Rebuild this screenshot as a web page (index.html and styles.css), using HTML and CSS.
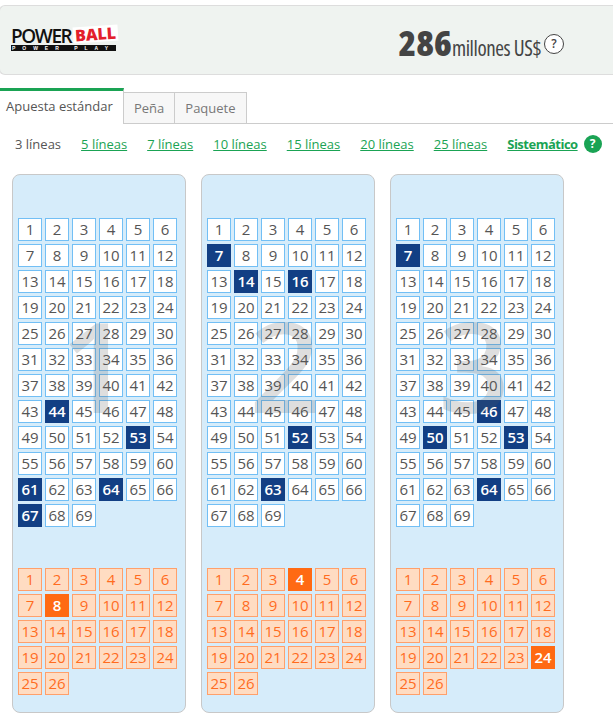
FILE: index.html
```html
<!DOCTYPE html>
<html lang="es">
<head>
    <meta charset="UTF-8">
    <title>Powerball</title>
    <link rel="stylesheet" href="styles.css">
</head>
<body>
    <div class="jackpot">
        <div class="logo">
            <div class="logo-top">
                <span class="logo-power">POWER</span>
                <span class="logo-ball">BALL</span>
            </div>
            <div class="logo-play">POWER PLAY</div>
        </div>
        <div class="prize">
            <span class="prize-num">286</span>
            <span class="prize-unit">millones US$</span>
            <span class="prize-help">?</span>
        </div>
    </div>

    <div class="tabs">
        <div class="tab active">Apuesta estándar</div>
        <div class="tab">Peña</div>
        <div class="tab">Paquete</div>
    </div>

    <div class="lines">
        <span class="current">3 líneas</span>
        <a href="#">5 líneas</a>
        <a href="#">7 líneas</a>
        <a href="#">10 líneas</a>
        <a href="#">15 líneas</a>
        <a href="#">20 líneas</a>
        <a href="#">25 líneas</a>
        <a href="#" class="system">Sistemático</a>
        <span class="help">?</span>
    </div>

    <div class="tickets" id="tickets"></div>

    <script src="script.js"></script>
</body>
</html>
```

FILE: styles.css
```css
* {
    box-sizing: border-box;
}
body {
    margin: 0;
    padding-top: 5px;
    font-family: "Open Sans", sans-serif;
    color: #555;
    background: #fff;
    overflow: hidden;
}
.jackpot {
    height: 70px;
    margin-left: -1px;
    background: #eff3f0;
    border: 1px solid #ddd;
    border-right: none;
    border-radius: 6px 0 0 6px;
    display: flex;
    align-items: center;
    justify-content: space-between;
}
.logo {
    margin: -4px 0 0 11px;
    width: 105px;
}
.logo-top {
    display: flex;
    align-items: center;
    height: 18px;
}
.logo-power {
    margin-top: 3px;
    font-size: 19px;
    font-weight: 600;
    line-height: 18px;
    letter-spacing: -1.4px;
    color: #111;
}
.logo-ball {
    margin: -1px 0 0 2px;
    padding: 0 2px;
    background: #fff;
    color: #e3202c;
    font-size: 16px;
    font-weight: 800;
    line-height: 16px;
    transform: rotate(-4deg);
}
.logo-play {
    margin-top: 2px;
    height: 6px;
    background: #111;
    color: #fff;
    font-family: "Liberation Sans", sans-serif;
    font-weight: bold;
    font-size: 5px;
    line-height: 6px;
    text-align: center;
    letter-spacing: 7px;
    white-space: nowrap;
    overflow: hidden;
}
.prize {
    display: flex;
    align-items: baseline;
    margin: 6px 49px 0 0;
    color: #444;
}
.prize-num {
    font-size: 36px;
    line-height: 40px;
    font-weight: 800;
    font-stretch: 75%;
}
.prize-unit {
    font-size: 21px;
    font-stretch: 75%;
    letter-spacing: -0.4px;
}
.prize-help {
    align-self: flex-start;
    margin: 11px 0 0 3px;
    width: 20px;
    height: 20px;
    border: 1px solid #444;
    border-radius: 50%;
    background: #fff;
    font-size: 12px;
    font-weight: 600;
    line-height: 18px;
    text-align: center;
}
.tabs {
    display: flex;
    align-items: flex-end;
    margin-top: 13px;
    height: 36px;
    border-bottom: 1px solid #ccc;
    font-size: 13px;
}
.tab {
    height: 32px;
    margin-bottom: -1px;
    padding: 0 10px;
    line-height: 30px;
    color: #777;
    background: #f7f7f7;
    border: 1px solid #ccc;
    border-left: none;
}
.tab.active {
    width: 124px;
    height: 36px;
    padding: 0 0 0 6px;
    color: #555;
    background: #fff;
    border: none;
    border-top: 3px solid #1aa354;
    border-right: 1px solid #ccc;
    line-height: 30px;
}
.lines {
    display: flex;
    align-items: center;
    gap: 20px;
    height: 20px;
    margin-top: 10px;
    padding-left: 15px;
    font-size: 13px;
}
.lines a {
    color: #1aa354;
}
.lines .system {
    font-weight: bold;
    letter-spacing: -0.5px;
}
.lines .help {
    margin-left: -14px;
    width: 18px;
    height: 18px;
    border-radius: 50%;
    background: #1aa354;
    color: #fff;
    font-size: 12px;
    font-weight: bold;
    line-height: 18px;
    text-align: center;
}
.tickets {
    display: flex;
    gap: 15px;
    margin-top: 20px;
    padding-left: 12px;
}
.ticket {
    position: relative;
    width: 174px;
    height: 539px;
    padding: 43px 5px 0 5px;
    background: #d6ecfa;
    border: 1px solid #c8c8c8;
    border-radius: 8px;
}
.grid {
    display: grid;
    grid-template-columns: repeat(6, 24px);
    grid-auto-rows: 23px;
    gap: 3px;
}
.grid.main {
    height: 308px;
}
.grid.extra {
    margin-top: 42px;
}
.num {
    font-size: 15px;
    line-height: 21px;
    text-align: center;
    letter-spacing: -0.2px;
    color: #555;
    background: #fff;
    border: 1px solid #72bff5;
}
.num.on {
    color: #fff;
    font-weight: 600;
    background: #123f84;
    border-color: #123f84;
}
.extra .num {
    color: #ff6c1f;
    background: #ffdcc2;
    border-color: #ffa06b;
}
.extra .num.on {
    color: #fff;
    background: #ff6a13;
    border-color: #ff6a13;
}
.watermark {
    position: absolute;
    top: 105px;
    left: 0;
    right: 6px;
    text-align: center;
    font-size: 125px;
    font-weight: 600;
    line-height: 170px;
    color: rgba(90, 90, 90, 0.2);
    pointer-events: none;
}
```

FILE: script.js
```js
// picked numbers per ticket
var tickets = [
    { main: [44, 53, 61, 64, 67], extra: [8] },
    { main: [7, 14, 16, 52, 63], extra: [4] },
    { main: [7, 46, 50, 53, 64], extra: [24] }
];

function buildGrid(type, total, picked) {
    var html = '<div class="grid ' + type + '">';
    for (var i = 1; i <= total; i++) {
        var cls = picked.indexOf(i) >= 0 ? 'num on' : 'num';
        html += '<div class="' + cls + '">' + i + '</div>';
    }
    return html + '</div>';
}

var out = '';
tickets.forEach(function (t, idx) {
    out += '<div class="ticket">';
    out += buildGrid('main', 69, t.main);
    out += buildGrid('extra', 26, t.extra);
    out += '<div class="watermark">' + (idx + 1) + '</div>';
    out += '</div>';
});
document.getElementById('tickets').innerHTML = out;
```
